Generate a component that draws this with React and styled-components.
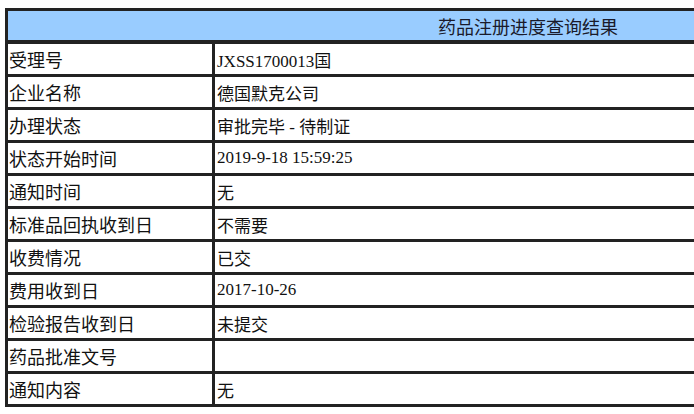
import styled, { createGlobalStyle } from "styled-components";

const GlobalStyle = createGlobalStyle`
  html, body {
    margin: 0;
    padding: 0;
    background: #ffffff;
    overflow: hidden;
  }
`;

const Page = styled.div`
  padding: 8px 0 0 5px;
  width: 694px;
  height: 414px;
  overflow: hidden;
  box-sizing: border-box;
`;

const Table = styled.div`
  display: grid;
  grid-template-columns: 204px 1fr;
  grid-auto-rows: 30px;
  gap: 3px;
  padding: 3px;
  width: 1046px;
  background: #222222;
  box-sizing: border-box;
`;

const Header = styled.div`
  grid-column: 1 / -1;
  height: 29px;
  background: #99ccff;
  color: #1a1a2a;
  display: flex;
  align-items: center;
  justify-content: center;
  font-family: "Noto Sans CJK SC", sans-serif;
  font-size: 18px;
`;

const Cell = styled.div`
  background: #ffffff;
  color: #111111;
  display: flex;
  align-items: center;
  padding-left: ${(p) => (p.$value ? "2px" : "1px")};
  white-space: nowrap;
  font-family: ${(p) =>
    p.$value
      ? `"Liberation Serif", "Noto Sans CJK SC", serif`
      : `"Noto Sans CJK SC", sans-serif`};
  font-size: ${(p) => (p.$value ? "17px" : "18px")};
`;

const rows = [
  ["受理号", "JXSS1700013国"],
  ["企业名称", "德国默克公司"],
  ["办理状态", "审批完毕 - 待制证"],
  ["状态开始时间", "2019-9-18 15:59:25"],
  ["通知时间", "无"],
  ["标准品回执收到日", "不需要"],
  ["收费情况", "已交"],
  ["费用收到日", "2017-10-26"],
  ["检验报告收到日", "未提交"],
  ["药品批准文号", ""],
  ["通知内容", "无"],
];

export default function App() {
  return (
    <>
      <GlobalStyle />
      <Page>
        <Table>
          <Header>药品注册进度查询结果</Header>
          {rows.map(([label, value]) => (
            <Row key={label} label={label} value={value} />
          ))}
        </Table>
      </Page>
    </>
  );
}

function Row({ label, value }) {
  return (
    <>
      <Cell>{label}</Cell>
      <Cell $value>{value}</Cell>
    </>
  );
}
